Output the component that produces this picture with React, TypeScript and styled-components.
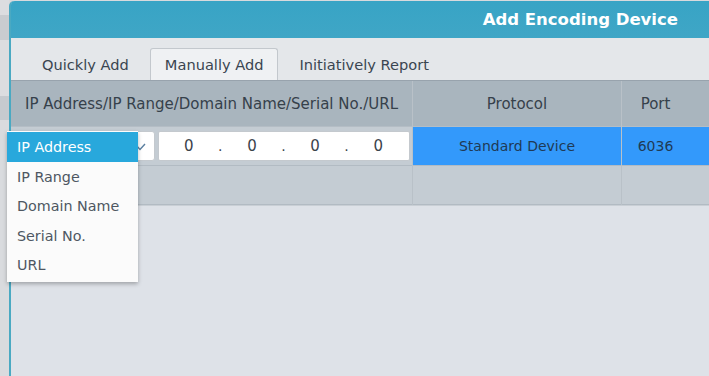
import React from "react";
import styled, { createGlobalStyle } from "styled-components";

const GlobalStyle = createGlobalStyle`
  html, body {
    margin: 0;
    padding: 0;
    width: 709px;
    height: 376px;
    overflow: hidden;
    background: #d8dadd;
    font-family: "DejaVu Sans", "Open Sans", sans-serif;
  }
`;

const Page = styled.div`
  display: flex;
  width: 709px;
  height: 376px;
  overflow: hidden;
`;

const Backdrop = styled.div`
  flex: 0 0 9px;
  background: linear-gradient(
    to bottom,
    #dcdde0 0px,
    #dcdde0 15px,
    #c9ccd0 15px,
    #c9ccd0 40px,
    #dcdde0 40px,
    #dcdde0 96px,
    #c6cacf 96px,
    #c6cacf 120px,
    #d9dbde 120px
  );
`;

const Dialog = styled.div`
  flex: 1 0 auto;
  margin-top: 1px;
  display: flex;
  flex-direction: column;
  background: #dee2e8;
  border-left: 2px solid #4aa9c2;
  border-top-left-radius: 5px;
  overflow: visible;
`;

const TitleBar = styled.div`
  height: 37px;
  display: flex;
  align-items: center;
  justify-content: flex-end;
  padding-right: 31px;
  background: linear-gradient(to bottom, #38a4c5, #3fa6c6);
  border-top-left-radius: 4px;
  color: #ffffff;
  font-size: 16.5px;
  font-weight: 600;
`;

const TabBar = styled.div`
  height: 42px;
  display: flex;
  align-items: flex-end;
  padding-left: 20px;
  gap: 2px;
  background: #e4e7ea;
`;

const Tab = styled.div<{ $active?: boolean }>`
  height: 31px;
  display: flex;
  align-items: center;
  padding: 0 ${({ $active }) => ($active ? "14px" : "10px")};
  margin: 0 ${({ $active }) => ($active ? "8px" : "0")};
  font-size: 14.6px;
  color: #3a4550;
  background: ${({ $active }) => ($active ? "#eff1f3" : "transparent")};
  border: 1px solid ${({ $active }) => ($active ? "#c3c8cd" : "transparent")};
  border-bottom: none;
  border-radius: 3px 3px 0 0;
`;

const Table = styled.div`
  display: grid;
  grid-template-columns: 401px 208px 1fr;
  column-gap: 1px;
  background: #b9c1c8;
  border-top: 1px solid #98a3ad;
  border-bottom: 1px solid #c9cfd5;
`;

const HeadCell = styled.div<{ $pr?: number }>`
  height: 45px;
  display: flex;
  align-items: center;
  justify-content: center;
  padding-right: ${({ $pr }) => $pr ?? 0}px;
  background: #a9b5be;
  border-bottom: 1px solid #b4bdc5;
  font-size: 15px;
  color: #36414b;
`;

const Cell = styled.div<{ $selected?: boolean; $pr?: number }>`
  position: relative;
  height: 38px;
  display: flex;
  align-items: center;
  justify-content: center;
  padding-right: ${({ $pr }) => $pr ?? 0}px;
  background: ${({ $selected }) => ($selected ? "#3399fb" : "#c4ccd3")};
  border-bottom: 1px solid #b2bbc3;
  font-size: 14px;
  color: #1f3a55;
`;

const AddressCell = styled(Cell)`
  justify-content: flex-start;
  gap: 3px;
  padding: 0 2px 0 3px;
  background: #c4ccd3;
`;

const SelectBox = styled.div`
  width: 141px;
  height: 30px;
  box-sizing: border-box;
  display: flex;
  align-items: center;
  justify-content: flex-end;
  padding: 2px 8px 0 0;
  background: #ffffff;
  border: 1px solid #c4c9ce;
  border-radius: 3px;
`;

const IpInput = styled.div`
  flex: 1;
  height: 30px;
  box-sizing: border-box;
  display: flex;
  align-items: center;
  justify-content: space-between;
  padding: 0 26px 0 25px;
  background: #ffffff;
  border: 1px solid #c4c9ce;
  border-radius: 2px;
  font-size: 15px;
  color: #3b434b;
`;

const Dot = styled.span`
  font-size: 14px;
`;

const Menu = styled.div`
  position: absolute;
  left: -4px;
  top: 4px;
  width: 131px;
  padding: 1px 0 2px;
  background: #fbfbfb;
  box-shadow: 0 2px 4px rgba(0, 0, 0, 0.28);
  z-index: 10;
`;

const MenuItem = styled.div<{ $active?: boolean }>`
  height: ${({ $active }) => ($active ? 30 : 29.5)}px;
  display: flex;
  align-items: center;
  padding-left: 10px;
  font-size: 14.3px;
  color: ${({ $active }) => ($active ? "#ffffff" : "#4e5762")};
  background: ${({ $active }) => ($active ? "#28a8dc" : "transparent")};
`;

const options = ["IP Address", "IP Range", "Domain Name", "Serial No.", "URL"];

const App: React.FC = () => {
  return (
    <>
      <GlobalStyle />
      <Page>
        <Backdrop />
        <Dialog>
          <TitleBar>Add Encoding Device</TitleBar>
          <TabBar>
            <Tab>Quickly Add</Tab>
            <Tab $active>Manually Add</Tab>
            <Tab>Initiatively Report</Tab>
          </TabBar>
          <Table>
            <HeadCell>IP Address/IP Range/Domain Name/Serial No./URL</HeadCell>
            <HeadCell>Protocol</HeadCell>
            <HeadCell $pr={20}>Port</HeadCell>

            <AddressCell>
              <SelectBox>
                <svg width="12" height="8" viewBox="0 0 12 8">
                  <path d="M1 1 L6 6.5 L11 1" stroke="#5a7fa0" strokeWidth="1.4" fill="none" />
                </svg>
              </SelectBox>
              <IpInput>
                <span>0</span>
                <Dot>.</Dot>
                <span>0</span>
                <Dot>.</Dot>
                <span>0</span>
                <Dot>.</Dot>
                <span>0</span>
              </IpInput>
              <Menu>
                {options.map((o, i) => (
                  <MenuItem key={o} $active={i === 0}>
                    {o}
                  </MenuItem>
                ))}
              </Menu>
            </AddressCell>
            <Cell $selected>Standard Device</Cell>
            <Cell $selected $pr={20}>
              6036
            </Cell>

            <Cell />
            <Cell />
            <Cell />
          </Table>
        </Dialog>
      </Page>
    </>
  );
};

export default App;
